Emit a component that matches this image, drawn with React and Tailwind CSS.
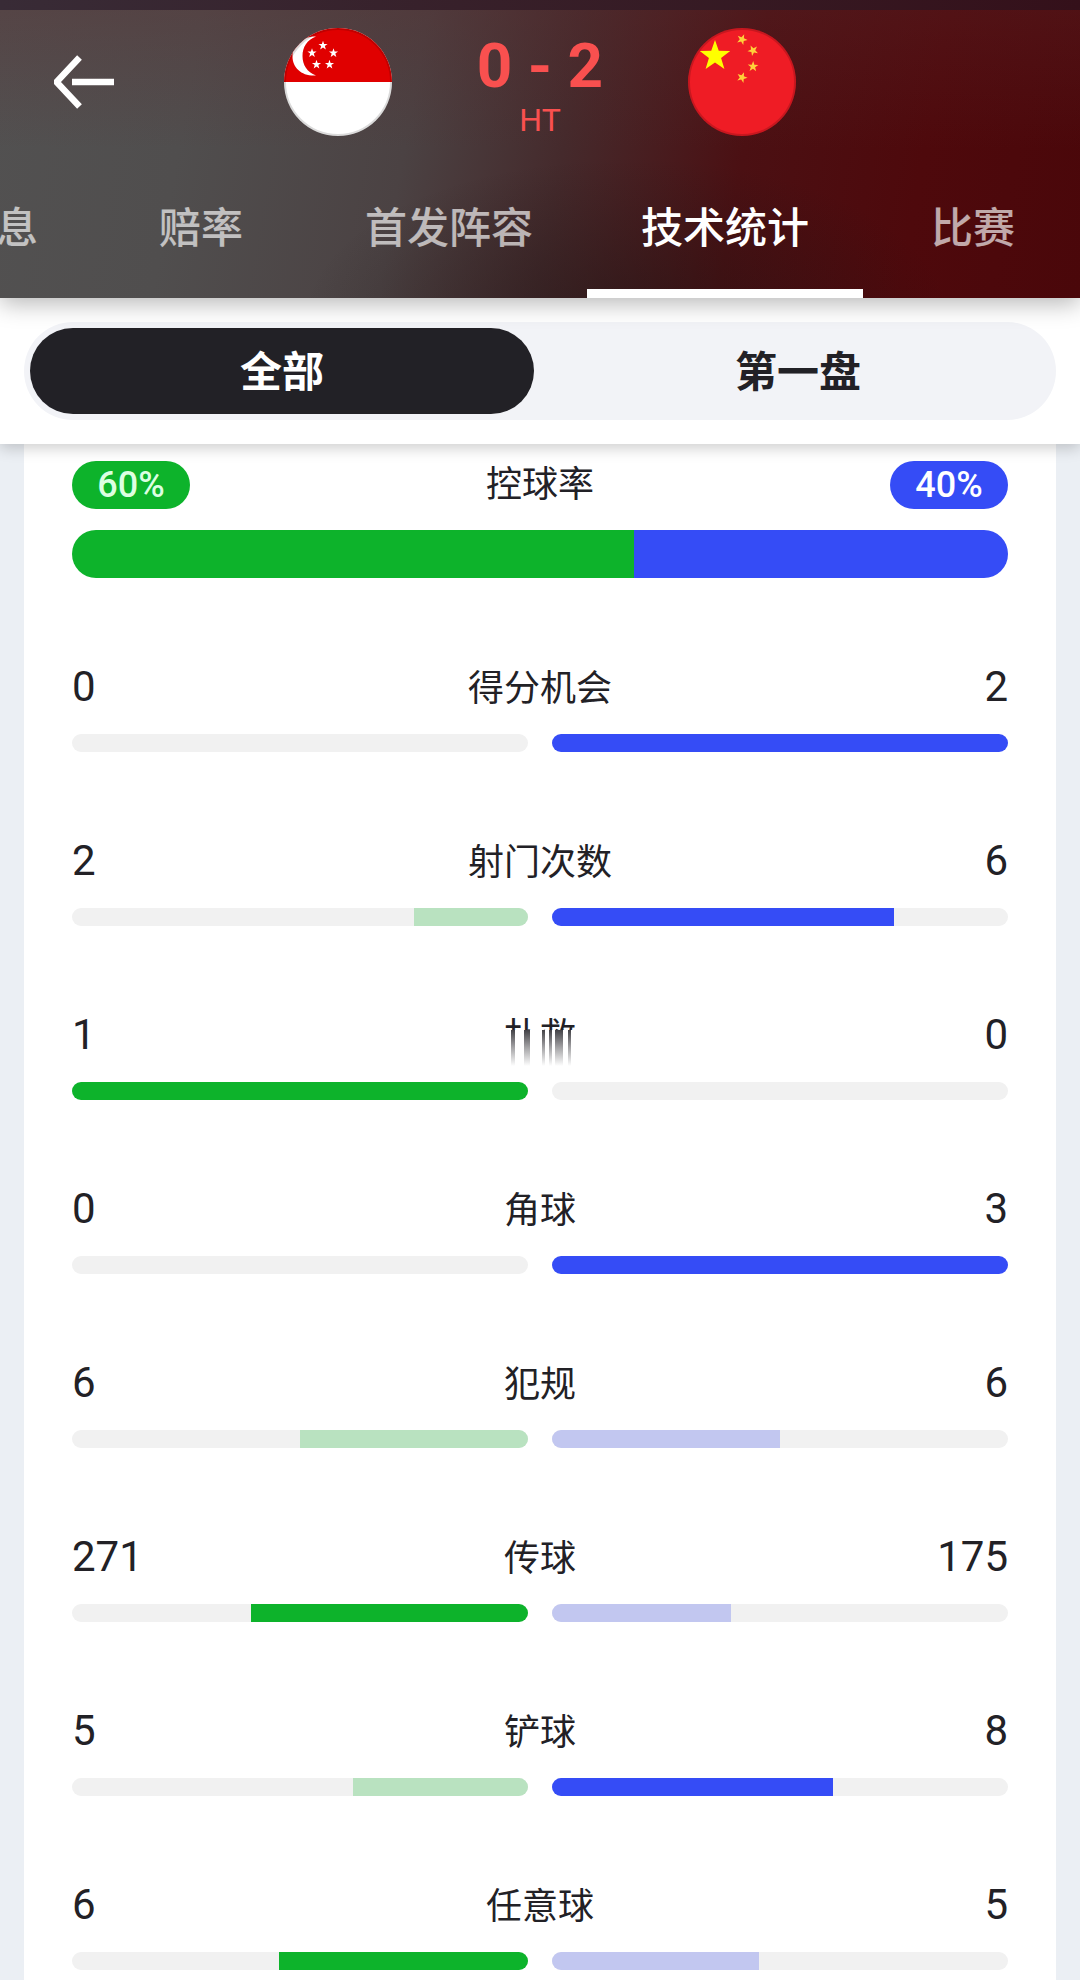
const tabs = [
  { label: "赔率" },
  { label: "首发阵容" },
  { label: "技术统计", active: true },
  { label: "比赛" },
];

const stats = [
  { label: "得分机会", home: 0, away: 2 },
  { label: "射门次数", home: 2, away: 6 },
  { label: "扑救", home: 1, away: 0, smeared: true },
  { label: "角球", home: 0, away: 3 },
  { label: "犯规", home: 6, away: 6 },
  { label: "传球", home: 271, away: 175 },
  { label: "铲球", home: 5, away: 8 },
  { label: "任意球", home: 6, away: 5 },
];

const STAR = "0,-10 2.35,-3.24 9.51,-3.09 3.8,1.24 5.88,8.09 0,4 -5.88,8.09 -3.8,1.24 -9.51,-3.09 -2.35,-3.24";

const Star = ({ x, y, size, rotate = 0, fill }) => (
  <polygon points={STAR} fill={fill} transform={`translate(${x} ${y}) rotate(${rotate}) scale(${size / 10})`} />
);

const SingaporeFlag = () => (
  <svg viewBox="0 0 108 108" className="size-27" role="img" aria-label="Singapore">
    <defs>
      <clipPath id="sg-clip">
        <circle cx="54" cy="54" r="54" />
      </clipPath>
    </defs>
    <g clipPath="url(#sg-clip)">
      <rect width="108" height="108" fill="#fff" />
      <rect width="108" height="54" fill="#e00000" />
      <path d="M32 8.5C18 8 8.500 17 8.500 28.500S18 48.500 32 47.500C23 44 18.500 37 18.500 28S23 12 32 8.500Z" fill="#fff" />
      <Star x={39} y={17.500} size={4.800} fill="#fff" />
      <Star x={28} y={25} size={4.800} fill="#fff" />
      <Star x={49.500} y={25} size={4.800} fill="#fff" />
      <Star x={32.500} y={36.500} size={4.800} fill="#fff" />
      <Star x={45.500} y={36.500} size={4.800} fill="#fff" />
    </g>
    <circle cx="54" cy="54" r="53" fill="none" stroke="#000" strokeOpacity="0.14" strokeWidth="2" />
  </svg>
);

const ChinaFlag = () => (
  <svg viewBox="0 0 108 108" className="size-27" role="img" aria-label="China">
    <circle cx="54" cy="54" r="54" fill="#ef1c25" />
    <circle cx="54" cy="54" r="53" fill="none" stroke="#000" strokeOpacity="0.16" strokeWidth="2" />
    <Star x={27} y={28} size={16} fill="#ffff00" />
    <Star x={54} y={11.500} size={5.600} rotate={23} fill="#ffd03a" />
    <Star x={65} y={22.500} size={5.600} rotate={46} fill="#ffd03a" />
    <Star x={65} y={38.500} size={5.600} rotate={2} fill="#ffd03a" />
    <Star x={54} y={49.500} size={5.600} rotate={21} fill="#ffd03a" />
  </svg>
);

const Header = () => (
  <header className="relative z-20 bg-[linear-gradient(to_bottom,rgba(92,40,44,0.32),transparent_50%),radial-gradient(ellipse_30%_55%_at_58%_108%,rgba(28,20,20,0.5),transparent),linear-gradient(100deg,#525151_0%,#504e4e_18%,#4b4243_38%,#452a2c_52%,#4b1013_68%,#4e090c_84%,#4a070a_100%)] shadow-[0_6px_22px_rgba(0,0,0,0.28)]">
    <div className="h-2.5 bg-linear-to-r from-[#382b36] to-[#34101a]" />
    <div className="relative flex justify-center pt-4.5">
      <button aria-label="返回" className="absolute left-12 top-10 flex h-16 w-18 items-center justify-center">
        <svg viewBox="0 0 60 54" className="h-[54px] w-15" fill="none" stroke="#fff" strokeWidth="6.500">
          <path d="M25.500 2.500 2.500 27 25.500 51.500M18 27H60" />
        </svg>
      </button>
      <SingaporeFlag />
      <div className="flex w-74 flex-col items-center text-[#f9504f]">
        <div className="text-[62px] leading-[76px] font-bold">0 - 2</div>
        <div className="text-[32px] leading-8 font-normal">HT</div>
      </div>
      <ChinaFlag />
    </div>
    <nav className="mt-5 flex h-[142px] overflow-hidden text-[42px] font-medium text-white/65">
      <a href="#info" className="-ml-1 flex w-[95px] shrink-0 items-center pt-0.5">息</a>
      {tabs.map((tab) => (
        <a
          key={tab.label}
          href={`#${tab.label}`}
          className={
            "relative flex min-w-[220px] shrink-0 items-center justify-center px-[54px] pt-0.5 " +
            (tab.active ? "text-white" : "")
          }
        >
          {tab.label}
          {tab.active && <span className="absolute inset-x-0 bottom-0 h-[9px] bg-white" />}
        </a>
      ))}
    </nav>
  </header>
);

const PeriodSwitch = () => (
  <div className="relative z-10 bg-white p-6 shadow-[0_4px_14px_rgba(0,0,0,0.2)]">
    <div className="flex gap-3 rounded-full bg-[#f2f3f7] p-1.5 text-[42px] leading-[82px] font-bold">
      <button className="flex-1 rounded-full bg-[#222126] pt-1 text-white">全部</button>
      <button className="flex-1 rounded-full pt-1 text-[#222126]">第一盘</button>
    </div>
  </div>
);

// lower part of the label runs down in fading streaks
const Smear = () => (
  <svg viewBox="0 0 72 36" className="absolute left-0 top-5 h-9 w-18">
    <defs>
      <linearGradient id="smear" x1="0" y1="0" x2="0" y2="1">
        <stop offset="0" stopColor="#222126" stopOpacity="0.85" />
        <stop offset="0.5" stopColor="#222126" stopOpacity="0.4" />
        <stop offset="1" stopColor="#222126" stopOpacity="0" />
      </linearGradient>
    </defs>
    <rect width="72" height="36" fill="#fff" />
    <rect x="7" width="4" height="36" fill="url(#smear)" />
    <rect x="20" width="6" height="36" fill="url(#smear)" />
    <rect x="38" width="3" height="36" fill="url(#smear)" />
    <rect x="45" width="3" height="36" fill="url(#smear)" />
    <rect x="51" width="8" height="36" fill="url(#smear)" />
    <rect x="64" width="3" height="36" fill="url(#smear)" />
  </svg>
);

const Bar = ({ share, side }) => {
  const home = side === "home";
  const strong = share > 0.5;
  const color = home
    ? strong ? "bg-[#0db32b]" : "bg-[#b9e2c0]"
    : strong ? "bg-[#354cf6]" : "bg-[#c2c7f0]";
  return (
    <div className={"flex h-4.5 flex-1 overflow-hidden rounded-full bg-[#f1f1f1] " + (home ? "justify-end" : "")}>
      <div className={color} style={{ width: `${share * 100}%` }} />
    </div>
  );
};

const StatRow = ({ label, home, away, smeared }) => {
  const total = home + away;
  return (
    <div className="pb-[82px]">
      <div className="grid h-[54px] grid-cols-[1fr_auto_1fr] items-baseline text-[42px] leading-[54px]">
        <span>{home}</span>
        <span className="relative text-4xl leading-[54px]">
          {label}
          {smeared && <Smear />}
        </span>
        <span className="text-right">{away}</span>
      </div>
      <div className="mt-5 flex gap-6">
        <Bar share={home / total} side="home" />
        <Bar share={away / total} side="away" />
      </div>
    </div>
  );
};

const Possession = ({ home, away }) => (
  <div className="pb-[82px]">
    <div className="flex items-center justify-between text-4xl leading-[48px]">
      <span className="w-[118px] rounded-full bg-[#0db32b] text-center font-medium leading-[48px] text-[#dcffe2]">{home}%</span>
      <span className="leading-[48px]">控球率</span>
      <span className="w-[118px] rounded-full bg-[#354cf6] text-center font-medium leading-[48px] text-white">{away}%</span>
    </div>
    <div className="mt-[21px] flex h-12 overflow-hidden rounded-full">
      <div className="bg-[#0db32b]" style={{ width: `${home}%` }} />
      <div className="flex-1 bg-[#354cf6]" />
    </div>
  </div>
);

export default function App() {
  return (
    <div className="flex h-screen flex-col overflow-hidden bg-[#ebeff4] font-[Roboto,'Noto_Sans_CJK_SC',sans-serif] text-[#222126]">
      <Header />
      <PeriodSwitch />
      <main className="mx-6 min-h-0 flex-1 overflow-hidden bg-white px-12 pt-[17px]">
        <Possession home={60} away={40} />
        {stats.map((stat) => (
          <StatRow key={stat.label} {...stat} />
        ))}
      </main>
    </div>
  );
}
